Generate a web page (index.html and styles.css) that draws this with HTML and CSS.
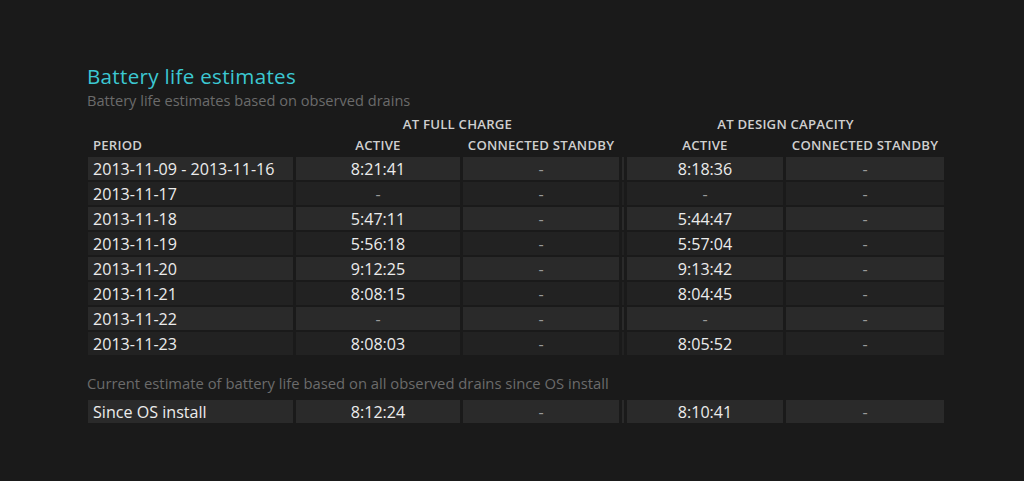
FILE: index.html
```html
<!DOCTYPE html>
<html>
<head>
<meta charset="utf-8">
<link rel="stylesheet" href="styles.css">
</head>
<body>
<div class="page">
  <h1 class="title">Battery life estimates</h1>
  <p class="sub">Battery life estimates based on observed drains</p>

  <div class="row groups">
    <div></div>
    <div class="span2">AT FULL CHARGE</div>
    <div class="sep-blank"></div>
    <div class="span2">AT DESIGN CAPACITY</div>
  </div>
  <div class="row heads">
    <div class="left">PERIOD</div>
    <div>ACTIVE</div>
    <div>CONNECTED STANDBY</div>
    <div class="sep-blank"></div>
    <div>ACTIVE</div>
    <div>CONNECTED STANDBY</div>
  </div>

  <div class="data">
    <div class="row odd"><div class="left">2013-11-09 - 2013-11-16</div><div>8:21:41</div><div class="dash">-</div><div class="sep"></div><div>8:18:36</div><div class="dash">-</div></div>
    <div class="row even"><div class="left">2013-11-17</div><div class="dash">-</div><div class="dash">-</div><div class="sep"></div><div class="dash">-</div><div class="dash">-</div></div>
    <div class="row odd"><div class="left">2013-11-18</div><div>5:47:11</div><div class="dash">-</div><div class="sep"></div><div>5:44:47</div><div class="dash">-</div></div>
    <div class="row even"><div class="left">2013-11-19</div><div>5:56:18</div><div class="dash">-</div><div class="sep"></div><div>5:57:04</div><div class="dash">-</div></div>
    <div class="row odd"><div class="left">2013-11-20</div><div>9:12:25</div><div class="dash">-</div><div class="sep"></div><div>9:13:42</div><div class="dash">-</div></div>
    <div class="row even"><div class="left">2013-11-21</div><div>8:08:15</div><div class="dash">-</div><div class="sep"></div><div>8:04:45</div><div class="dash">-</div></div>
    <div class="row odd"><div class="left">2013-11-22</div><div class="dash">-</div><div class="dash">-</div><div class="sep"></div><div class="dash">-</div><div class="dash">-</div></div>
    <div class="row even"><div class="left">2013-11-23</div><div>8:08:03</div><div class="dash">-</div><div class="sep"></div><div>8:05:52</div><div class="dash">-</div></div>
  </div>

  <p class="note">Current estimate of battery life based on all observed drains since OS install</p>

  <div class="data">
    <div class="row odd"><div class="left">Since OS install</div><div>8:12:24</div><div class="dash">-</div><div class="sep"></div><div>8:10:41</div><div class="dash">-</div></div>
  </div>
</div>
</body>
</html>
```
FILE: styles.css
```css
html, body {
  margin: 0;
  padding: 0;
  background: #1a1a1a;
}
body {
  font-family: "Open Sans", "Noto Sans", sans-serif;
  color: #ececec;
}
.page {
  padding: 63px 0 0 87px;
}
.title {
  margin: 0;
  font-size: 20.6px;
  font-weight: normal;
  color: #3cc8d2;
  line-height: 26px;
  letter-spacing: 0.3px;
}
.sub {
  margin: 0;
  font-size: 14.6px;
  line-height: 22px;
  color: #6b6b6b;
}
.row {
  display: grid;
  grid-template-columns: 205px 164px 156px 2px 156px 158px;
  column-gap: 3px;
  margin-left: 1px;
}
.row > div {
  text-align: center;
  white-space: nowrap;
}
.row > .left {
  text-align: left;
  padding-left: 5px;
}
.groups, .heads {
  font-size: 13.2px;
  font-weight: 600;
  color: #cfcfcf;
  letter-spacing: 0.2px;
}
.groups {
  margin-top: 2px;
  line-height: 22px;
}
.groups .span2 {
  grid-column: span 2;
}
.heads {
  line-height: 20px;
  margin-bottom: 2px;
}
.data {
  display: flex;
  flex-direction: column;
  row-gap: 2px;
}
.data .row {
  font-size: 16.1px;
  line-height: 22px;
  height: 23px;
}
.data .row > div {
  padding-top: 1px;
}
.odd > div {
  background: #2a2a2a;
}
.even > div {
  background: #222222;
}
.dash {
  color: #9a9a9a;
}
.note {
  margin: 17px 0 6px 0;
  font-size: 14.8px;
  line-height: 22px;
  color: #6b6b6b;
}
```
